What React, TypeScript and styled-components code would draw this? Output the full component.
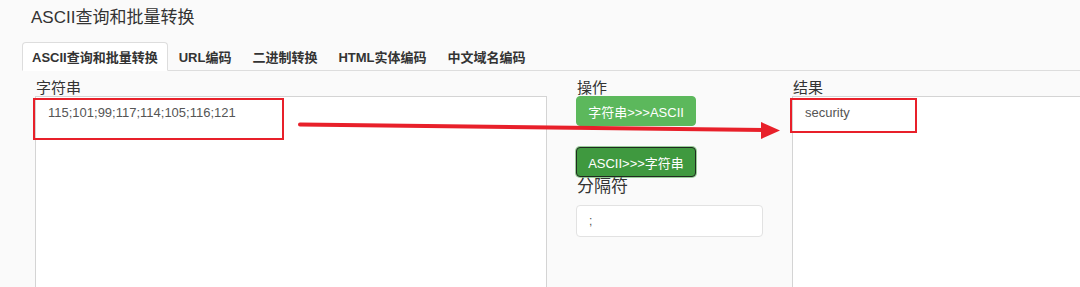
import React from "react";
import styled, { createGlobalStyle } from "styled-components";

const GlobalStyle = createGlobalStyle`
  html, body {
    margin: 0;
    padding: 0;
    background: #fafafa;
    overflow: hidden;
  }
  body {
    font-family: "Liberation Sans", "Noto Sans CJK SC", sans-serif;
    color: #333;
  }
`;

const Page = styled.div`
  position: relative;
  width: 1080px;
  height: 287px;
  overflow: hidden;
  background: #fafafa;
`;

const Title = styled.h1`
  margin: 0;
  padding: 8px 0 0 31px;
  height: 34px;
  box-sizing: border-box;
  font-size: 17px;
  line-height: 20px;
  font-weight: normal;
  color: #333;
`;

const Tabs = styled.ul`
  display: flex;
  margin: 8px 0 0 22px;
  padding: 0;
  list-style: none;
  border-bottom: 1px solid #ddd;
  height: 28px;
`;

const Tab = styled.li<{ $active?: boolean }>`
  margin-right: 1px;
  margin-bottom: -1px;
  padding: 0 9px;
  height: 29px;
  box-sizing: border-box;
  display: flex;
  align-items: center;
  font-size: 13px;
  font-weight: bold;
  color: #333;
  border: 1px solid ${(p) => (p.$active ? "#ddd" : "transparent")};
  border-bottom-color: ${(p) => (p.$active ? "#fff" : "transparent")};
  border-radius: 4px 4px 0 0;
  background: ${(p) => (p.$active ? "#fff" : "transparent")};
`;

const Row = styled.div`
  display: flex;
  gap: 29px;
  padding: 9px 0 0 35px;
`;

const Col = styled.div<{ $w: number }>`
  width: ${(p) => p.$w}px;
  flex-shrink: 0;
  display: flex;
  flex-direction: column;
`;

const Label = styled.label<{ $big?: boolean }>`
  font-size: ${(p) => (p.$big ? "17px" : "15px")};
  line-height: ${(p) => (p.$big ? "19px" : "16px")};
  color: #333;
  margin-left: 1px;
`;

const Area = styled.textarea`
  width: 100%;
  height: 220px;
  box-sizing: border-box;
  margin: 0;
  padding: 7px 12px;
  font-family: "Liberation Sans", "Noto Sans CJK SC", sans-serif;
  font-size: 13px;
  line-height: 18px;
  color: #555;
  background: #fff;
  border: 1px solid #d4d4d4;
  border-radius: 0;
  resize: none;
  outline: none;
`;

const Button = styled.button<{ $pressed?: boolean }>`
  width: 120px;
  height: 30px;
  padding: 0;
  font-family: "Liberation Sans", "Noto Sans CJK SC", sans-serif;
  font-size: 13px;
  color: #fff;
  border-radius: 4px;
  background: ${(p) => (p.$pressed ? "#3f993f" : "#5cb85c")};
  border: 1px solid ${(p) => (p.$pressed ? "#1f2a1f" : "#5cb85c")};
  box-shadow: ${(p) => (p.$pressed ? "0 0 0 1px #9acd9a" : "none")};
  margin-top: ${(p) => (p.$pressed ? "21px" : "0")};
`;

const Input = styled.input`
  margin-top: 9px;
  width: 187px;
  height: 32px;
  box-sizing: border-box;
  padding: 0 12px;
  font-family: "Liberation Sans", "Noto Sans CJK SC", sans-serif;
  font-size: 12px;
  color: #555;
  background: #fff;
  border: 1px solid #e2e2e2;
  border-radius: 4px;
  outline: none;
`;

const Mark = styled.div<{ $x: number; $y: number; $w: number; $h: number }>`
  position: absolute;
  left: ${(p) => p.$x}px;
  top: ${(p) => p.$y}px;
  width: ${(p) => p.$w}px;
  height: ${(p) => p.$h}px;
  box-sizing: border-box;
  border: 2px solid #e8202a;
  pointer-events: none;
`;

const Overlay = styled.svg`
  position: absolute;
  left: 0;
  top: 0;
  pointer-events: none;
`;

export default function App() {
  return (
    <Page>
      <GlobalStyle />
      <Title>ASCII查询和批量转换</Title>
      <Tabs>
        <Tab $active>ASCII查询和批量转换</Tab>
        <Tab>URL编码</Tab>
        <Tab>二进制转换</Tab>
        <Tab>HTML实体编码</Tab>
        <Tab>中文域名编码</Tab>
      </Tabs>
      <Row>
        <Col $w={512}>
          <Label>字符串</Label>
          <Area readOnly defaultValue="115;101;99;117;114;105;116;121" />
        </Col>
        <Col $w={187}>
          <Label>操作</Label>
          <Button>字符串&gt;&gt;&gt;ASCII</Button>
          <Button $pressed>ASCII&gt;&gt;&gt;字符串</Button>
          <Label $big>分隔符</Label>
          <Input readOnly defaultValue=";" />
        </Col>
        <Col $w={400}>
          <Label>结果</Label>
          <Area readOnly defaultValue="security" />
        </Col>
      </Row>
      <Mark $x={33} $y={98} $w={251} $h={42} />
      <Mark $x={790} $y={98} $w={127} $h={35} />
      <Overlay width="1080" height="287">
        <line x1="300" y1="124.5" x2="764" y2="130" stroke="#e8202a" strokeWidth="4" strokeLinecap="round" />
        <polygon points="761,122 780,130.5 761,139" fill="#e8202a" />
      </Overlay>
    </Page>
  );
}
